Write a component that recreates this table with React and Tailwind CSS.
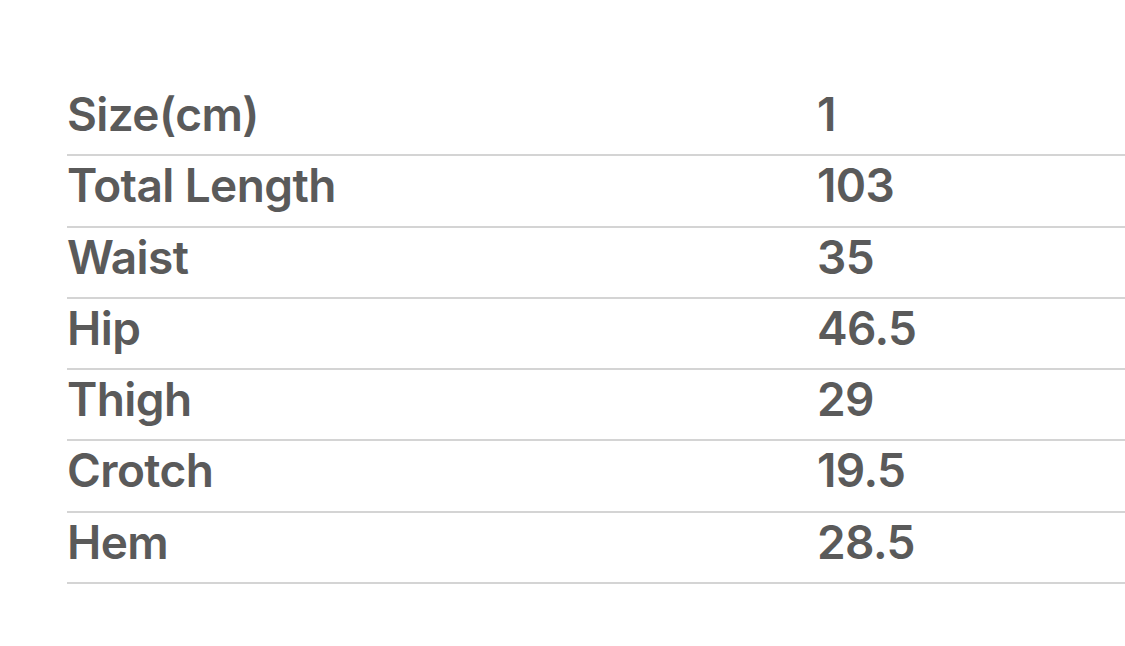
export default function App() {
  const rows = [
    ["Size(cm)", "1"],
    ["Total Length", "103"],
    ["Waist", "35"],
    ["Hip", "46.5"],
    ["Thigh", "29"],
    ["Crotch", "19.5"],
    ["Hem", "28.5"],
  ];
  return (
    <div className="w-[1125px] h-[646px] bg-white overflow-hidden pt-[85px] pl-[67px]">
      <div className="flex flex-col">
        {rows.map(([k, v]) => (
          <div
            key={k}
            className="flex h-[71.3px] pt-[5px] border-b-2 border-[#d4d4d4] text-[46px] leading-[48px] font-semibold tracking-[-0.6px] text-[#5a5a5a]"
            style={{ fontFamily: 'Inter, "Liberation Sans", Arial, sans-serif' }}
          >
            <div className="w-[750px] shrink-0">{k}</div>
            <div>{v}</div>
          </div>
        ))}
      </div>
    </div>
  );
}
